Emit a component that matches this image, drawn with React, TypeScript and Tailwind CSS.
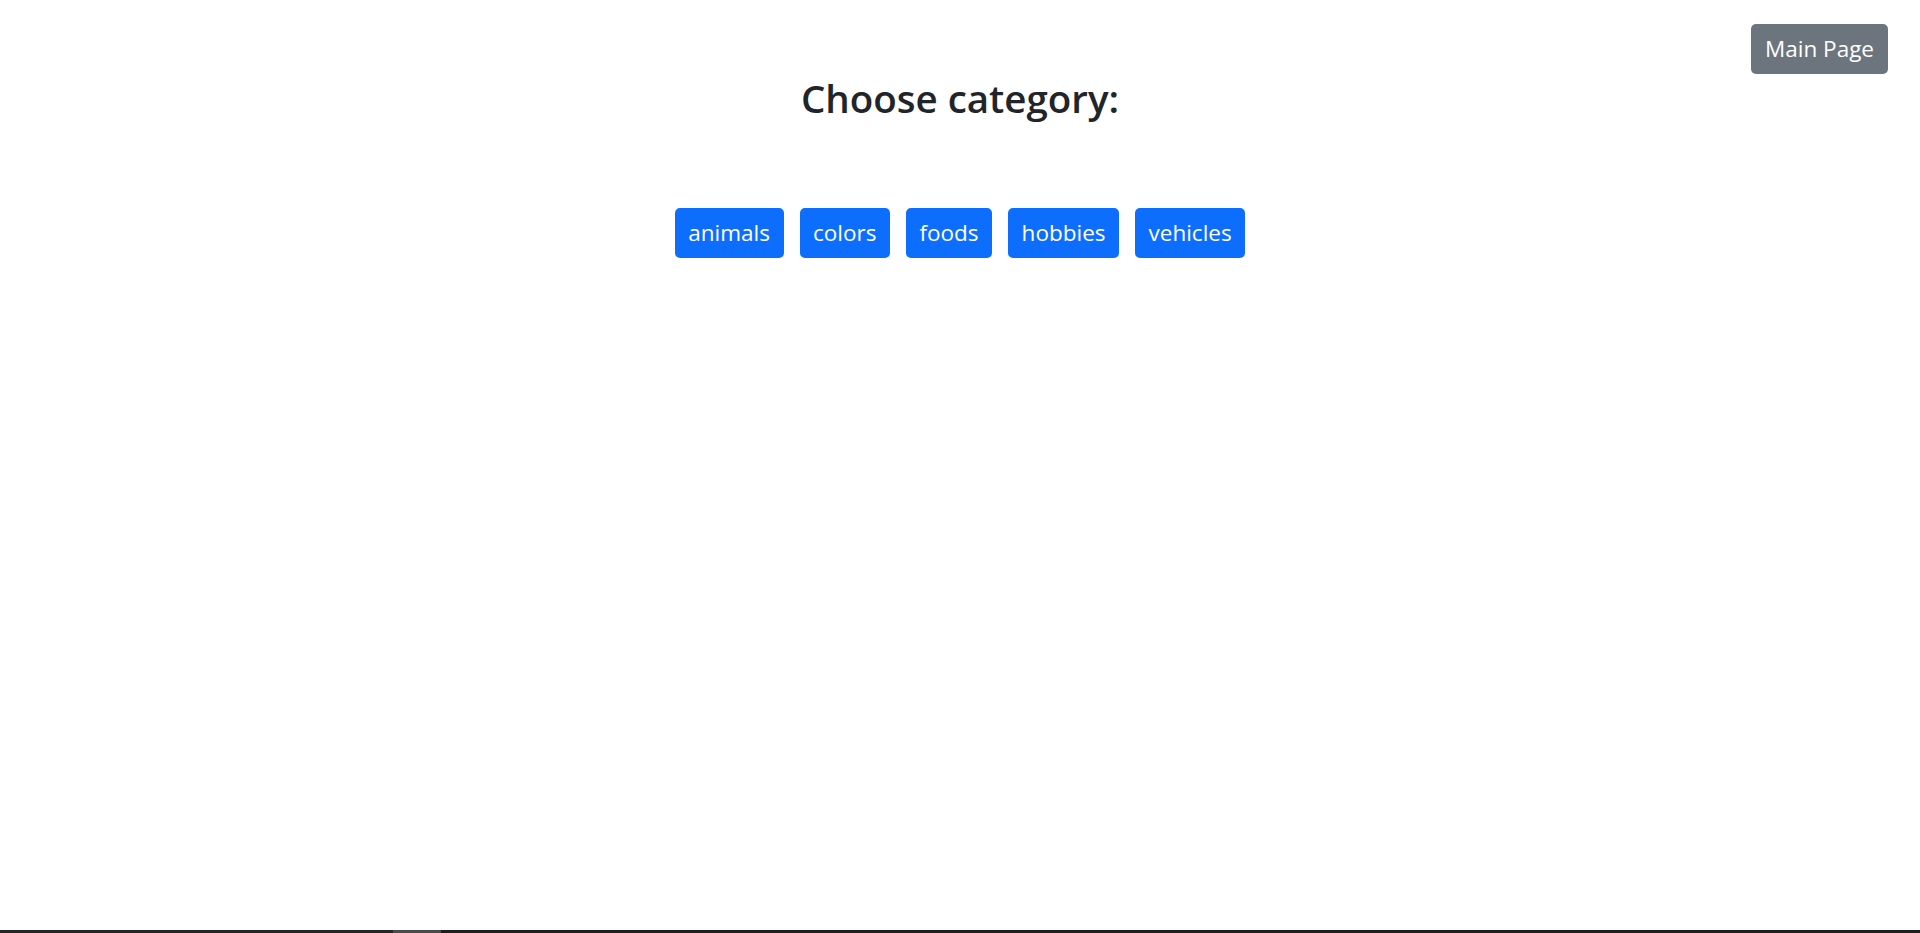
const categories = ["animals", "colors", "foods", "hobbies", "vehicles"];

export default function App() {
  return (
    <div className="h-[933px] bg-white flex flex-col font-['Open_Sans',sans-serif] text-[#212529]">
      <div className="flex justify-end pt-[24px] pr-[32px]">
        <button className="bg-[#6c757d] text-white text-[22.5px] leading-[34px] px-[14px] py-[8px] rounded-[5px]">
          Main Page
        </button>
      </div>

      <h2 className="text-center text-[38.5px] leading-[48px] font-semibold">Choose category:</h2>

      <div className="flex justify-center gap-[16px] mt-[86px]">
        {categories.map((c) => (
          <button
            key={c}
            className="bg-[#0d6efd] text-white text-[22.5px] leading-[34px] px-[13.5px] py-[8px] rounded-[5px]"
          >
            {c}
          </button>
        ))}
      </div>

      <div className="mt-auto h-[3px] bg-[#1e1e1e] flex">
        <div className="w-[393px] bg-[#262626]" />
        <div className="w-[48px] bg-[#4a4a4a]" />
      </div>
    </div>
  );
}
